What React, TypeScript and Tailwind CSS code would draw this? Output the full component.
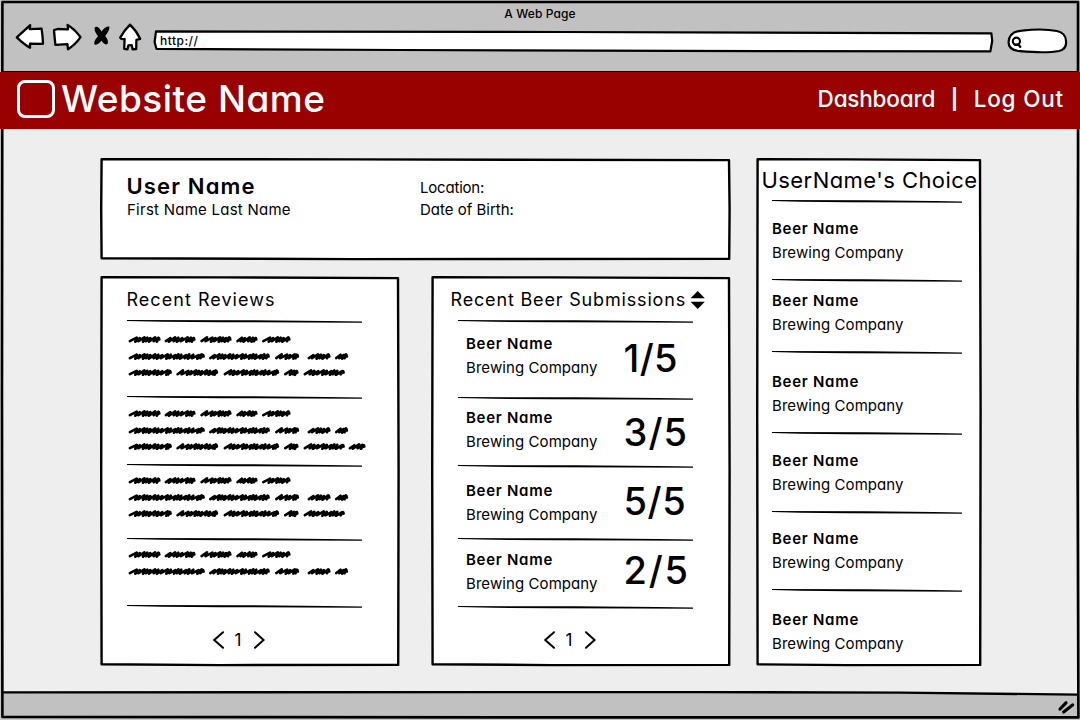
import type { ReactNode } from "react";

const reviewLines: number[][][] = [
  [[0.3, 32.7], [36.3, 67.7], [72, 103.7], [108, 129.7], [133.7, 162.7]],
  [[0.3, 77], [80.7, 142], [146.7, 171.3], [179.3, 202.7], [206.7, 220.3]],
  [[0.3, 44], [48, 90.3], [95.3, 151.3], [155.7, 170.7], [175.3, 217]],
];
const extraWord = [220.3, 237.7];

function scribble(x0: number, x1: number, y: number) {
  const strides = [4, 5.4, 3.1, 4.6, 2.9, 3, 4.8, 3.2];
  let i = Math.round(x0 * 3) % 8;
  let x = x0 + 1.6;
  let d = `M${x} ${y + 1.6}`;
  while (x < x1 - 4.8) {
    const s = Math.min(strides[i % 8], x1 - 3.8 - x);
    const top = y - 2.2 + (i % 3) * 0.4;
    d += `L${(x + s + 1.4).toFixed(2)} ${top.toFixed(2)}L${(x + s).toFixed(2)} ${(y + 1.7 + (i % 2) * 0.5).toFixed(2)}`;
    x += s;
    i++;
  }
  return d + `L${x1 - 1.8} ${y - 1.4}L${x1 - 1.4} ${y}`;
}

function Scribbles({ rows, extra }: { rows: number; extra?: boolean }) {
  const d = reviewLines
    .slice(0, rows)
    .map((words, r) =>
      [...words, ...(extra && r === 2 ? [extraWord] : [])].map(([a, b]) => scribble(a, b, [4.5, 21.5, 37.6][r])).join(""),
    )
    .join("");
  return (
    <svg className="block h-[42px] w-[242px]" viewBox="0 0 242 42" fill="none">
      <path d={d} stroke="#000" strokeWidth="2.6" strokeLinecap="round" strokeLinejoin="round" />
    </svg>
  );
}

function Rule({ w }: { w: number }) {
  const p = (f: number) => (w * f).toFixed(1);
  return (
    <svg className="block h-[5px] shrink-0" width={w} height="5" viewBox={`0 0 ${w} 5`}>
      <path d={`M0 1.1L${p(0.5)} 1.2L${p(0.85)} 2L${w} 2.6V3.7L${p(0.75)} 3.5L${p(0.4)} 3.2L${p(0.15)} 2.8L0 1.9Z`} />
    </svg>
  );
}

function Card({ w, h, className, children }: { w: number; h: number; className: string; children: ReactNode }) {
  const d = `M1.6 1.2L${w * 0.4} 1.4L${w - 2} 2.1L${w - 1.4} ${h * 0.5}L${w - 1.8} ${h - 1.1}L${w * 0.4} ${h - 0.9}L1.6 ${h - 1.7}L1.2 ${h * 0.5}Z`;
  return (
    <section className={`relative shrink-0 ${className}`}>
      <svg className="absolute inset-0 overflow-visible" width={w} height={h} viewBox={`0 0 ${w} ${h}`}>
        <path d={d} fill="#fff" stroke="#000" strokeWidth="2.4" strokeLinejoin="round" />
      </svg>
      <div className="relative">{children}</div>
    </section>
  );
}

function Beer() {
  return (
    <div className="pt-px pl-px">
      <h3 className="text-[15px] leading-6 font-semibold tracking-[0.72px] whitespace-nowrap">Beer Name</h3>
      <p className="text-[15px] leading-6 tracking-[0.08px] whitespace-nowrap">Brewing Company</p>
    </div>
  );
}

function Pager() {
  return (
    <nav className="flex items-center">
      <svg className="h-5 w-3" viewBox="0 0 12 20" fill="none" stroke="#000" strokeWidth="2" strokeLinecap="round">
        <path d="M10 2.2L1.2 10L10 17.8" />
      </svg>
      <span className="-ml-[2px] w-[30px] text-center text-[17px] leading-5">1</span>
      <svg className="h-5 w-3" viewBox="0 0 12 20" fill="none" stroke="#000" strokeWidth="2" strokeLinecap="round">
        <path d="M2 2.2L10.6 10L2 17.8" />
      </svg>
    </nav>
  );
}

const submissions = [
  { score: "1/5", row: "h-[72px]", beer: "pt-[7.3px]", rating: "pt-[14px] tracking-[0.4px]" },
  { score: "3/5", row: "h-[63px]", beer: "pt-[4.3px]", rating: "pt-[11px] tracking-[1.1px]" },
  { score: "5/5", row: "h-[68px]", beer: "pt-[9.3px]", rating: "pt-[12px] tracking-[0.6px]" },
  { score: "2/5", row: "h-[63px]", beer: "pt-[5.3px]", rating: "pt-[8px] tracking-[1.8px]" },
];

const reviews = [
  { rows: 3, extra: false, row: "h-[71px] pt-[11.3px]" },
  { rows: 3, extra: true, row: "h-[63px] pt-[9.3px]" },
  { rows: 3, extra: false, row: "h-[69px] pt-[8.3px]" },
  { rows: 2, extra: false, row: "h-[62px] pt-[8.3px]" },
];

const choices = [
  "h-[74px] pt-[12.3px]",
  "h-[67px] pt-[5.3px]",
  "h-[76px] pt-[14.3px]",
  "h-[74px] pt-[12.3px]",
  "h-[73px] pt-[11.3px]",
  "h-[67px] pt-[14.3px]",
];

function Toolbar() {
  return (
    <div className="h-[72px] border-b border-black bg-[#c1c1c1]">
      <p className="h-[22px] pt-[5px] text-center text-[12px] leading-[17px] font-[450] tracking-[0.12px]">A Web Page</p>
      <div className="flex h-8 pl-[14px]">
        <svg width="100" height="32" viewBox="14 22 100 32" fill="#fff" stroke="#000" strokeWidth="2.3" strokeLinejoin="round" strokeLinecap="round">
          <path d="M16.8 37.4L30.2 25.2L29.8 29.2L41.6 28.6Q42.6 35 43 43.8L30 43.6L30 47.8Q24 44.4 16.8 37.4Z" />
          <path d="M54 30.2L57.6 29L68 29.4L67.6 25Q74 28.6 80.6 37.2Q75 45 68 49.2L67.4 44.2L55.4 44.8Q54.6 38 54 30.2Z" />
          <path d="M94.6 27.6Q97.6 24.6 101.6 31.6Q105.6 25.8 109.4 26.6Q109.8 30.6 105.2 36Q108.6 40 107.8 43.4Q105 46.4 101.4 40.6Q98 45.8 94.4 44.4Q93.4 41.2 98 36.2Q94.2 31.6 94.6 27.6Z" fill="#000" stroke="none" />
        </svg>
        <svg width="38" height="32" viewBox="114 22 38 32" fill="#fff" stroke="#000" strokeWidth="2.3" strokeLinejoin="round">
          <path d="M130 24.6Q124 30.6 120.2 37.6Q121 39.8 124.6 39L124.2 48.8L127.4 49.4L128.4 45.4L131.8 45.2L132.6 49.4L136.2 49L136.4 39.8L140.2 38.8Q136.6 31 130 24.6Z" />
        </svg>
        <div className="relative h-8 w-[842px]">
          <svg className="absolute inset-0" width="842" height="32" viewBox="152 22 842 32">
            <path d="M156 31.4L560 32L991.4 33.4L992.2 41L990.4 51.4L760 51.2L400 50L156.4 48.8L154.6 42Z" fill="#fff" stroke="#000" strokeWidth="2.2" strokeLinejoin="round" />
          </svg>
          <span className="relative block pt-[10px] pl-2 text-[12px] leading-[17px] font-[450] tracking-[0.5px]">http://</span>
        </div>
        <svg className="ml-3" width="64" height="32" viewBox="1006 22 64 32" fill="#fff" stroke="#000" strokeWidth="2.2" strokeLinecap="round">
          <path d="M1008.6 42C1009 35 1013 31.2 1022 30.6C1034 29.2 1048 29.2 1057 31C1063 32.4 1065.6 35 1066 41C1066.6 46.4 1065 49.6 1059 51C1049 53 1032 52.2 1020 51.2C1012 50.6 1008.4 48 1008.6 42Z" />
          <circle cx="1016.4" cy="41.2" r="3.6" strokeWidth="2.1" />
          <path d="M1015 44.8L1018.4 44.6L1020.2 46.8" strokeWidth="2.4" fill="none" />
        </svg>
      </div>
    </div>
  );
}

export default function App() {
  return (
    <div className="relative flex h-[720px] w-[1080px] flex-col overflow-hidden bg-[#eeeeee] font-['Inter','Liberation_Sans',sans-serif] text-black [font-feature-settings:'cv11']">
      <Toolbar />
      <header className="z-10 flex h-[57px] shrink-0 items-center bg-[#990000] pb-[3px] pl-[17px] text-white">
        <div className="h-[38px] w-[38px] rounded-[8px] border-[3px] border-white" />
        <h1 className="ml-[6px] text-[37px] leading-[54px] font-medium tracking-[0.5px] whitespace-nowrap">Website Name</h1>
        <nav className="mr-4 ml-auto flex items-center text-[22.5px] leading-[54px] font-medium whitespace-nowrap">
          <a className="tracking-[-0.2px]">Dashboard</a>
          <span className="w-[38.5px] text-center text-[20px] font-bold">|</span>
          <a className="tracking-[0.8px]">Log Out</a>
        </nav>
      </header>

      <main className="flex h-[562px] shrink-0 gap-[25px] pt-[29px] pl-[100px]">
        <div className="flex w-[631px] flex-col gap-4">
          <Card w={631} h={102} className="h-[102px] w-[631px]">
            <div className="flex pt-[17px] pl-[27px] whitespace-nowrap">
              <div className="w-[293px]">
                <h2 className="-ml-[0.5px] text-[22px] leading-[23px] font-semibold tracking-[1.15px]">User Name</h2>
                <p className="text-[15px] leading-6 tracking-[0.25px]">First Name Last Name</p>
              </div>
              <div className="pt-[2px] text-[15px] leading-[22px]">
                <p className="tracking-[-0.2px]">Location:</p>
                <p>Date of Birth:</p>
              </div>
            </div>
          </Card>

          <div className="flex justify-between">
            <Card w={300} h={390} className="h-[390px] w-[300px]">
              <div className="pl-[27px]">
                <h2 className="-ml-[0.5px] h-[43px] pt-[7px] text-[18px] leading-[34px] tracking-[1.03px]">Recent Reviews</h2>
                <Rule w={235} />
                {reviews.map((r, i) => (
                  <div key={i}>
                    <div className={`${r.row} pl-[1px]`}>
                      <Scribbles rows={r.rows} extra={r.extra} />
                    </div>
                    <Rule w={235} />
                  </div>
                ))}
                <div className="pt-[21px] pl-[86px]">
                  <Pager />
                </div>
              </div>
            </Card>

            <Card w={300} h={390} className="h-[390px] w-[300px]">
              <div className="pl-[27px]">
                <div className="-ml-[8px] flex h-[43px] pt-[7px]">
                  <h2 className="w-[240px] pl-[0.5px] text-[18px] leading-[34px] tracking-[0.83px] whitespace-nowrap">Recent Beer Submissions</h2>
                  <svg className="mt-[7px]" width="16" height="20" viewBox="0 0 16 20">
                    <path d="M7.7 1L14.8 8.3H0.6Z M0.6 11.7H14.8L7.7 19Z" />
                  </svg>
                </div>
                <Rule w={235} />
                {submissions.map((s) => (
                  <div key={s.score}>
                    <div className={`${s.row} flex pl-[7px]`}>
                      <div className={`${s.beer} w-[158.5px]`}>
                        <Beer />
                      </div>
                      <p className={`${s.rating} text-[38px] leading-[40px] font-medium whitespace-nowrap`}>{s.score}</p>
                    </div>
                    <Rule w={235} />
                  </div>
                ))}
                <div className="pt-[20px] pl-[86px]">
                  <Pager />
                </div>
              </div>
            </Card>
          </div>
        </div>

        <Card w={226} h={508} className="h-[508px] w-[226px]">
          <h2 className="h-[41px] pt-[5px] pl-[5.5px] text-[22px] leading-[34px] tracking-[0.43px] whitespace-nowrap">UserName's Choice</h2>
          <div className="pl-4">
            <Rule w={190} />
            {choices.map((row, i) => (
              <div key={i}>
                <div className={`${row} -ml-[1px]`}>
                  <Beer />
                </div>
                {i < choices.length - 1 && <Rule w={190} />}
              </div>
            ))}
          </div>
        </Card>
      </main>

      <footer className="flex flex-1 justify-end bg-[#c1c1c1]">
        <svg width="1080" height="29" viewBox="0 691 1080 29" strokeLinecap="round">
          <path d="M0 690H1080V694.4L900 692.4L0 692.4Z" fill="#eeeeee" />
          <path d="M2 692.4L700 692L900 692.6L1078 694.6" stroke="#000" strokeWidth="2.4" fill="none" />
          <path d="M1060 709L1066 702.8M1063.6 712L1072.6 705" stroke="#000" strokeWidth="3.2" />
        </svg>
      </footer>

      <svg className="pointer-events-none absolute inset-0" width="1080" height="720" viewBox="0 0 1080 720" fill="none">
        <path d="M0 0H1080V720H0ZM2 2V718L1078.5 718V2Z" fill="#c8c8c8" fillRule="evenodd" />
        <path d="M2.4 2L1078 2L1078 160L1077.4 400L1078.4 717.4L600 717.4L2.4 717L2 400Z" stroke="#000" strokeWidth="2.6" strokeLinejoin="round" />
      </svg>
    </div>
  );
}
